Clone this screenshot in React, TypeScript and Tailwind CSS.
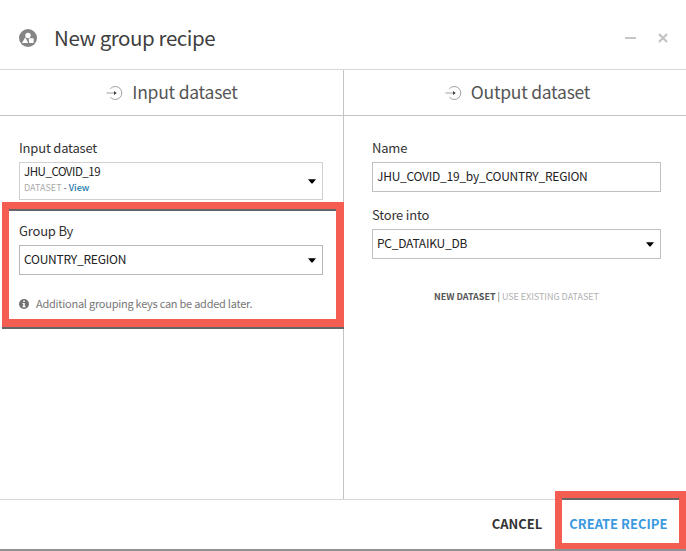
import type { ReactNode } from "react";

function Caret() {
  return (
    <svg className="shrink-0" width="8" height="5" viewBox="0 0 8 5">
      <path d="M0 .3h8L4.5 4.5h-1z" fill="#000" />
    </svg>
  );
}

function ArrowIntoCircle() {
  return (
    <svg className="shrink-0" width="17" height="16" viewBox="0 0 17 16" fill="none" stroke="#888" strokeWidth="0.8">
      <path d="M4.3 3.8A6.5 6.5 0 1 1 4.3 12.2" />
      <path d="M.5 8h9" />
      <path d="M8 6.1L10.8 8 8 9.9z" fill="#444" stroke="none" />
    </svg>
  );
}

function GroupIcon() {
  return (
    <svg className="shrink-0" width="18" height="18" viewBox="0 0 18 18">
      <circle cx="9" cy="9" r="9" fill="#858585" />
      <circle cx="9" cy="6.4" r="2.7" fill="#fff" />
      <path d="M3 14L6.3 8.2 9.2 14z" fill="#fff" />
      <path d="M9.6 9.2h5v4.8h-4.4z" fill="#fff" />
    </svg>
  );
}

function ColumnTitle({ children }: { children: ReactNode }) {
  return (
    <h2 className="flex h-[46px] items-center justify-center border-b border-[#c4c4c4] text-[#555]">
      <ArrowIntoCircle />
      {children}
    </h2>
  );
}

function Label({ children }: { children: ReactNode }) {
  return <div className="h-5 text-[13px] leading-5 tracking-[-0.2px] text-[#333]">{children}</div>;
}

export default function App() {
  return (
    <div className="relative flex h-[551px] w-[686px] flex-col overflow-hidden border-b-2 border-[#929292] bg-white font-['Noto_Sans_CJK_SC',sans-serif] whitespace-nowrap">
      <header className="flex h-[70px] shrink-0 items-center border-b border-[#d8d8d8] pt-[7px] pr-[18px] pl-[19px]">
        <GroupIcon />
        <h1 className="ml-[17px] pb-[2px] text-[20.5px] leading-8 tracking-[-0.42px] text-[#404040]">New group recipe</h1>
        <div className="ml-auto flex items-center gap-[22px]">
          <div className="h-[2px] w-[11px] bg-[#c6c6c6]" />
          <svg width="10" height="10" viewBox="0 0 10 10" stroke="#c4c4c4" strokeWidth="2.3">
            <path d="M1 1l8 8M9 1L1 9" />
          </svg>
        </div>
      </header>

      <main className="flex min-h-0 flex-1">
        <section className="w-[344px] border-r border-[#c4c4c4]">
          <ColumnTitle>
            <span className="mr-[-1px] ml-[9px] text-[17.5px] tracking-[-0.24px]">Input dataset</span>
          </ColumnTitle>
          <div className="pt-[22px] pr-5 pl-[19px]">
            <Label>Input dataset</Label>
            <div className="mt-1 flex h-[38px] items-center justify-between border border-[#d0d0d0] pr-[6px] pl-1">
              <div className="pb-[3px]">
                <div className="h-[17px] text-[11.5px] leading-[17px] tracking-[-0.46px] text-[#222]">JHU_COVID_19</div>
                <div className="h-4 text-[9px] leading-4 text-[#555]">
                  <span className="text-[#aaa]">DATASET</span> - <span className="font-medium text-[#1b7bae]">View</span>
                </div>
              </div>
              <Caret />
            </div>
            <div className="mt-[21px]">
              <Label>Group By</Label>
            </div>
            <div className="mt-1 flex h-[30px] items-center justify-between border border-[#b8b8b8] pr-[6px] pl-1">
              <span className="pb-[2px] text-[12px] tracking-[-0.24px] text-[#222]">COUNTRY_REGION</span>
              <Caret />
            </div>
            <div className="mt-[21px] flex h-4 items-center">
              <svg width="10" height="10" viewBox="0 0 10 10">
                <circle cx="5" cy="5" r="5" fill="#717171" />
                <path d="M4.2 1.5h1.6V3H4.2zM3.5 3.9h2.3v3.2h.7v1.1h-3V7.1h.7V5h-.7z" fill="#fff" />
              </svg>
              <span className="ml-[7px] pb-[2px] text-[11px] leading-4 tracking-[-0.25px] text-[#777]">
                Additional grouping keys can be added later.
              </span>
            </div>
          </div>
        </section>

        <section className="flex-1">
          <ColumnTitle>
            <span className="mr-[-5px] ml-[9px] text-[17.5px] tracking-[-0.26px]">Output dataset</span>
          </ColumnTitle>
          <div className="pt-[22px] pr-[25px] pl-7">
            <Label>Name</Label>
            <div className="mt-1 flex h-[30px] items-center border border-[#c0c0c0] pb-[2px] pl-1 text-[12px] tracking-[-0.24px] text-[#222]">
              JHU_COVID_19_by_COUNTRY_REGION
            </div>
            <div className="mt-[13px]">
              <Label>Store into</Label>
            </div>
            <div className="mt-1 flex h-[30px] items-center justify-between border border-[#c0c0c0] pr-[6px] pl-1">
              <span className="pb-[2px] text-[12px] tracking-[-0.24px] text-[#222]">PC_DATAIKU_DB</span>
              <Caret />
            </div>
            <div className="mt-[30px] text-center text-[9px] leading-4 tracking-[-0.03px] text-[#555]">
              <span className="font-bold">NEW DATASET</span> | <span className="text-[#b0b0b0]">USE EXISTING DATASET</span>
            </div>
          </div>
        </section>
      </main>

      <footer className="flex h-[50px] shrink-0 items-center justify-end gap-[27px] border-t border-[#d8d8d8] pr-[18.6px] pb-[2px] text-[13px] font-bold">
        <span className="text-[#333]">CANCEL</span>
        <span className="text-[#3b99e0]">CREATE RECIPE</span>
      </footer>

      <div className="absolute top-[202px] left-[2px] h-[125px] w-[342px] border-[7px] border-r-8 border-b-8 border-[#f45d52] drop-shadow-[0_2px_0.7px_#666]" />
      <div className="absolute top-[491px] left-[555px] h-[60px] w-[131px] border-[7px] border-b-8 border-[#f45d52] drop-shadow-[0_2px_0.7px_#666]" />
    </div>
  );
}
